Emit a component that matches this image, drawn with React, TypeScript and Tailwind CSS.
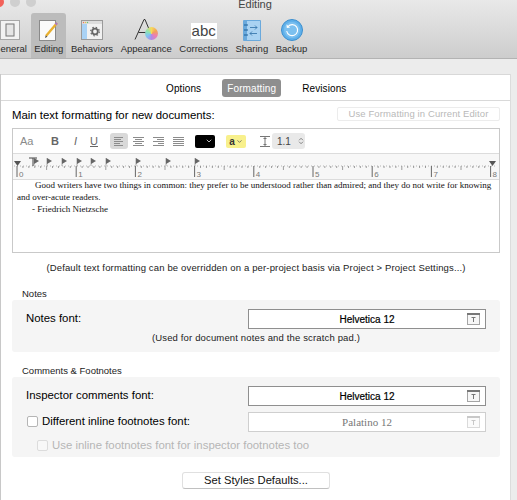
import { ChevronDown, ChevronsUpDown } from "lucide-react";
import type { ReactNode } from "react";

const sans = "font-['Liberation_Sans',Arial,sans-serif]";
const serif = "font-['Liberation_Serif','Times_New_Roman',serif]";

const FontIcon = ({ faded }: { faded?: boolean }) => (
  <svg width="13" height="12" viewBox="0 0 13 12" className={faded ? "opacity-40" : ""}>
    <rect x="0.5" y="0.5" width="12" height="11" fill="#f7f7f7" stroke="#a5a5a5" />
    <rect x="0" y="0" width="13" height="2" fill="#777" />
    <path d="M4.5 4.5h4M6.5 4.5v4.5" stroke="#777" fill="none" />
  </svg>
);

const FontWell = ({ label, faded }: { label: string; faded?: boolean }) => (
  <div
    className={`w-[238px] h-5 flex items-center justify-center relative bg-white border ${
      faded ? "border-[#cfcfcf]" : "border-[#8f8f8f]"
    }`}
  >
    {faded ? (
      <span className={`${serif} text-[11px] text-[#777]`}>{label}</span>
    ) : (
      <span className="text-[10px] text-black [-webkit-text-stroke:0.2px_black]">{label}</span>
    )}
    <span className="absolute right-[5px] top-[3px] flex">
      <FontIcon faded={faded} />
    </span>
  </div>
);

const Tool = ({ label, active, icon }: { label: string; active?: boolean; icon: ReactNode }) => (
  <div
    className={`h-[45px] flex flex-col items-center shrink-0 ${
      active ? "bg-[#bcbcbc] rounded-t-[3px] px-[3px] -mx-[3px]" : ""
    }`}
  >
    <div className="h-[26px] mt-[4px] flex items-center justify-center">{icon}</div>
    <span className="text-[9.5px] leading-[12px] text-[#2b2b2b] whitespace-nowrap">{label}</span>
  </div>
);

const AlignIcon = ({ rows }: { rows: [number, number][] }) => (
  <svg width="11" height="9" viewBox="0 0 11 9">
    {rows.map(([x, w], i) => (
      <rect key={i} x={x} y={i * 2} width={w} height="1" fill="#8c8c8c" />
    ))}
  </svg>
);

const tabStops = [34, 47, 62, 77, 91, 106, 136, 166, 195];
const inches = [0, 1, 2, 3, 4, 5, 6, 7, 8];

const Ruler = () => (
  <div className="h-[27px] bg-[#f7f7f7] border-y border-[#dcdcdc] shrink-0">
    <svg width="486" height="25" viewBox="0 0 486 25" className="block">
      <line x1="1" x2="484" y1="12" y2="12" stroke="#999" strokeWidth="0.7" strokeDasharray="1 2" />
      {Array.from({ length: 81 }).map((_, i) =>
        i % 10 === 0 ? null : (
          <line key={i} x1={4 + i * 5.92} x2={4 + i * 5.92} y1={12} y2={i % 5 === 0 ? 16 : 14} stroke="#777" strokeWidth="0.7" />
        )
      )}
      {inches.map((n) => (
        <g key={n}>
          <line x1={4 + n * 59.2} x2={4 + n * 59.2} y1="12" y2="23" stroke="#666" />
          <text x={6 + n * 59.2} y="23" fontSize="8" fill="#777" fontFamily="Liberation Sans">
            {n}
          </text>
        </g>
      ))}
      <path d="M1 7h7l-3.5 5z" fill="#555" />
      <path d="M476 7h7l-3.5 5z" fill="#555" />
      <path d="M16 4h8M20 4v8" stroke="#444" fill="none" />
      {tabStops.map((x) => (
        <g key={x}>
          <path d={`M${x - 13} 4v8`} stroke="#888" strokeWidth="0.7" />
          <path d={`M${x - 13} 4l5 3l-5 3z`} fill="#666" />
        </g>
      ))}
    </svg>
  </div>
);

export default function App() {
  return (
    <div className={`${sans} w-[517px] h-[500px] overflow-hidden bg-[#ececec] text-black flex flex-col`}>
      {/* title + toolbar */}
      <div className="h-[59px] shrink-0 bg-gradient-to-b from-[#e9e9e9] to-[#cdcdcd] border-b border-[#b3b3b3] relative overflow-hidden">
        <div className="h-[13px] text-center text-[11px] leading-[8px] text-[#444] pr-[7px]">Editing</div>
        <span className="absolute -left-[6px] -top-[3px] w-[10px] h-[10px] rounded-full bg-[#f2625a]" />
        <span className="absolute left-[10px] -top-[3px] w-[10px] h-[10px] rounded-full bg-[#cfcfcf]" />
        <span className="absolute left-[26px] -top-[3px] w-[10px] h-[10px] rounded-full bg-[#cfcfcf]" />

        <div className="flex items-start -ml-[7px] gap-[7.5px]">
          <Tool
            label="General"
            icon={
              <svg width="20" height="20" viewBox="0 0 20 20">
                <rect x="0.5" y="0.5" width="19" height="19" fill="#f3f3f3" stroke="#a8a8a8" />
                <rect x="6" y="4" width="8" height="12" fill="#e6e6e6" stroke="#777" />
              </svg>
            }
          />
          <Tool
            active
            label="Editing"
            icon={
              <svg width="20" height="21" viewBox="0 0 20 21">
                <rect x="0.5" y="0.5" width="16" height="20" fill="#fafafa" stroke="#8a8a8a" />
                <path d="M7 16L18 3" stroke="#e8b030" strokeWidth="2.4" />
                <path d="M16.5 4.5L18 3" stroke="#a878c8" strokeWidth="2.4" />
                <path d="M6 18l.8-2.6 1.6 1.4z" fill="#444" />
              </svg>
            }
          />
          <Tool
            label="Behaviors"
            icon={
              <svg width="22" height="20" viewBox="0 0 22 20">
                <rect x="0.5" y="0.5" width="21" height="19" fill="#f1f1f1" stroke="#9a9a9a" />
                <rect x="1" y="1" width="20" height="3" fill="#ddd" />
                <rect x="1" y="4" width="5" height="15" fill="#a9d2f5" />
                <circle cx="2.5" cy="2.5" r="0.7" fill="#e8735c" />
                <circle cx="4.5" cy="2.5" r="0.7" fill="#e6c04a" />
                <circle cx="6.5" cy="2.5" r="0.7" fill="#6cc070" />
                <circle cx="14" cy="11.5" r="2.8" fill="none" stroke="#666" strokeWidth="1.8" />
                <circle cx="14" cy="11.5" r="4.3" fill="none" stroke="#666" strokeWidth="1.2" strokeDasharray="1.5 1.9" />
              </svg>
            }
          />
          <Tool
            label="Appearance"
            icon={
              <div className="relative w-[24px] h-[24px]">
                <svg width="24" height="24" viewBox="0 0 24 24">
                  <path d="M1 21.5L10 1.5h1l7.5 18M4.5 14.5h11" fill="none" stroke="#333" strokeWidth="1" />
                </svg>
                <span className="absolute left-[11px] top-[9px] w-[13px] h-[13px] rounded-full bg-[conic-gradient(#f7d95a,#f2a25a,#ee7fb0,#b08ae8,#7fc4f2,#8fe6b0,#f7d95a)]" />
              </div>
            }
          />
          <Tool
            label="Corrections"
            icon={<span className="bg-white px-[1px] text-[15px] leading-[16px] text-[#444] mt-[1px]">abc</span>}
          />
          <Tool
            label="Sharing"
            icon={
              <svg width="18" height="21" viewBox="0 0 18 21">
                <rect x="0" y="0" width="18" height="21" rx="1" fill="#6aa9dc" />
                <rect x="4" y="1" width="13" height="19" fill="#a9d2f2" />
                <path d="M1 5h4M1 10h4M1 15h4" stroke="#1f5f96" strokeWidth="1" />
                <path d="M7 7.5h7m-2-2l2 2l-2 2M14 13.5H7m2-2l-2 2l2 2" fill="none" stroke="#2d6ea6" strokeWidth="0.8" />
              </svg>
            }
          />
          <Tool
            label="Backup"
            icon={
              <svg width="22" height="22" viewBox="0 0 22 22">
                <circle cx="11" cy="11" r="10.5" fill="#5fb0ea" stroke="#3d8fce" />
                <circle cx="11" cy="11" r="8" fill="#7cc0ef" />
                <path d="M7 7.5a5.5 5.5 0 1 1-1.3 4.5" fill="none" stroke="#fff" strokeWidth="1.1" />
                <path d="M5.5 5.5l.3 3.5l3.4-.6z" fill="#fff" />
              </svg>
            }
          />
        </div>
      </div>

      <div className="h-[15px] shrink-0" />

      {/* main panel */}
      <div className="ml-px w-[509px] flex-1 bg-white border-t border-[#d8d8d8] shadow-[-1px_0_0_#c8c8c8,1px_0_0_#dcdcdc]">
        <div className="h-[26px] pt-px border-b border-[#d9d9d9] flex items-center pl-[165px] text-[10px] tracking-[0.1px]">
          <span>Options</span>
          <span className="ml-[21px] w-[59px] h-[18px] rounded-[3px] bg-[#8e8e8e] text-white flex items-center justify-center">Formatting</span>
          <span className="ml-[21px]">Revisions</span>
        </div>

        <div className="pl-[11px] pr-[10px]">
          <div className="h-[27px] flex items-center justify-between">
            <span className="text-[11.4px] mt-[2px]">Main text formatting for new documents:</span>
            <span className="w-[163px] h-[14px] mt-[-1px] border border-[#ececec] rounded-[2px] flex items-center justify-center text-[9.5px] tracking-[0.1px] text-[#b9b9b9]">
              Use Formatting in Current Editor
            </span>
          </div>

          {/* editor */}
          <div className="h-[125px] border border-[#c9c9c9] flex flex-col">
            <div className="h-[24px] shrink-0 flex items-center bg-white">
              <span className="ml-[7px] text-[11px] text-[#8a8a8a] w-[13px]">Aa</span>
              <span className="ml-[18px] text-[11px] font-bold text-[#666]">B</span>
              <span className="ml-[15px] text-[11px] italic text-[#666]">I</span>
              <span className="ml-[13px] text-[11px] underline text-[#666]">U</span>
              <span className="ml-[12px] w-[18px] h-[16px] rounded-[3px] bg-[#d9d9d9] flex items-center justify-center">
                <AlignIcon rows={[[1, 9], [1, 7], [1, 9], [1, 6], [1, 9]]} />
              </span>
              <span className="ml-[5px] flex">
                <AlignIcon rows={[[0, 11], [2, 7], [0, 11], [2, 7], [0, 11]]} />
              </span>
              <span className="ml-[9px] flex">
                <AlignIcon rows={[[0, 11], [4, 7], [0, 11], [5, 6], [0, 11]]} />
              </span>
              <span className="ml-[9px] flex">
                <AlignIcon rows={[[0, 11], [0, 11], [0, 11], [0, 11], [0, 11]]} />
              </span>
              <span className="ml-[11px] w-[20px] h-[13px] rounded-[2px] bg-black flex items-center justify-end pr-[2px]">
                <ChevronDown size={8} color="#ddd" strokeWidth={2.5} />
              </span>
              <span className="ml-[11px] w-[20px] h-[13px] rounded-[2px] bg-[#f8f08c] flex items-center justify-center gap-px text-[10px] font-bold text-[#333]">
                a<ChevronDown size={7} color="#555" strokeWidth={2.5} />
              </span>
              <svg width="10" height="11" viewBox="0 0 10 11" className="ml-[14px]">
                <path d="M0 .5h10M0 10.5h10M5 1v9M3.5 2.5h3M3.5 8.5h3" stroke="#777" fill="none" />
              </svg>
              <span className="ml-[2px] w-[33px] h-[16px] rounded-[3px] bg-[#e9e9e9] flex items-center pl-[5px] gap-[6px] text-[10px] text-[#444]">
                1.1
                <ChevronsUpDown size={10} color="#555" />
              </span>
            </div>

            <Ruler />

            <div className={`${serif} text-[9px] leading-[12px] text-[#111] px-[4px] whitespace-nowrap -mt-px`}>
              <p className="pl-[18px]">Good writers have two things in common: they prefer to be understood rather than admired; and they do not write for knowing</p>
              <p>and over-acute readers.</p>
              <p className="pl-[15px]">- Friedrich Nietzsche</p>
            </div>
          </div>

          <p className="h-[30px] flex items-center justify-center text-[9.5px] tracking-[0.15px] text-[#222]">
            (Default text formatting can be overridden on a per-project basis via Project &gt; Project Settings...)
          </p>

          {/* notes */}
          <div className="h-[17px] pl-[10px] flex items-end text-[9.5px] leading-[13px] text-[#222]">Notes</div>
          <div className="h-[52px] bg-[#f5f5f5] rounded-[3px] pt-[9px] pr-[14px] pl-[14px]">
            <div className="flex items-center justify-between">
              <span className="text-[11.4px]">Notes font:</span>
              <FontWell label="Helvetica 12" />
            </div>
            <p className="text-[9.5px] tracking-[0.15px] leading-[12px] mt-[3px] text-center text-[#222]">(Used for document notes and the scratch pad.)</p>
          </div>

          {/* comments */}
          <div className="h-[25px] pl-[10px] flex items-end text-[9.5px] leading-[13px] text-[#222]">Comments &amp; Footnotes</div>
          <div className="h-[80px] bg-[#f5f5f5] rounded-[3px] pt-[9px] pr-[14px] pl-[14px]">
            <div className="flex items-center justify-between">
              <span className="text-[11.4px]">Inspector comments font:</span>
              <FontWell label="Helvetica 12" />
            </div>
            <div className="flex items-center justify-between mt-[6px]">
              <span className="flex items-center gap-[4px] text-[11.4px]">
                <span className="ml-px w-[11px] h-[11px] rounded-[2px] bg-white border border-[#b5b5b5]" />
                Different inline footnotes font:
              </span>
              <FontWell faded label="Palatino 12" />
            </div>
            <div className="flex items-center gap-[4px] mt-[5px] ml-[11px] text-[11.4px] text-[#b5b5b5]">
              <span className="w-[11px] h-[11px] rounded-[2px] bg-[#f8f8f8] border border-[#dcdcdc]" />
              Use inline footnotes font for inspector footnotes too
            </div>
          </div>

          <div className="flex justify-center mt-[15px]">
            <button className="w-[148px] h-[17px] bg-white rounded-[3px] border border-[#e0e0e0] border-b-[#c0c0c0] text-[11.2px] leading-none text-[#111]">
              Set Styles Defaults...
            </button>
          </div>
        </div>
      </div>
    </div>
  );
}
